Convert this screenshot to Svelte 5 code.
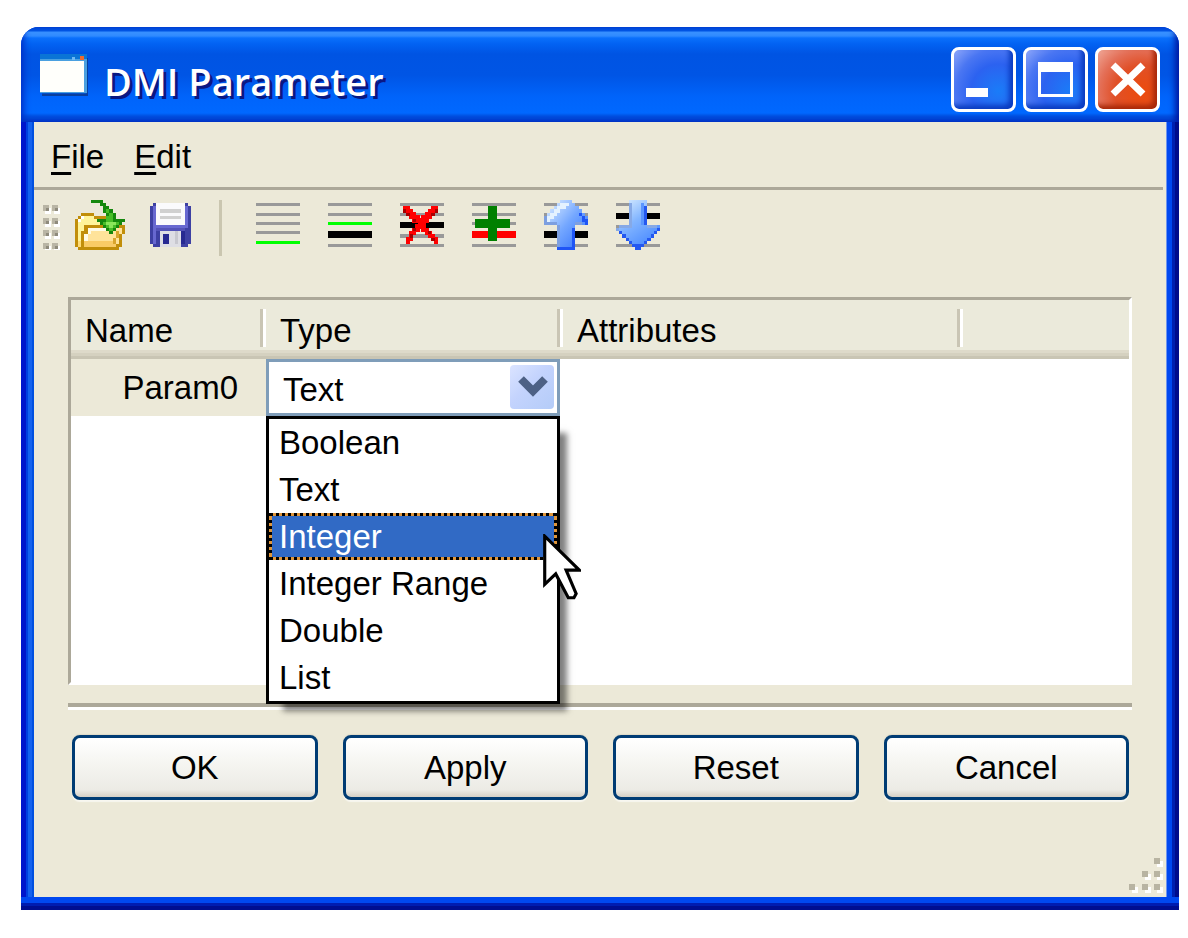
<script>
  const types = ['Boolean', 'Text', 'Integer', 'Integer Range', 'Double', 'List'];
  const actions = ['OK', 'Apply', 'Reset', 'Cancel'];

  let rows = $state([{ name: 'Param0', type: 'Text' }]);
  let openRow = $state(0);
  let hovered = $state('Integer');

  function toggle(e, i) {
    e.preventDefault();
    openRow = openRow === i ? -1 : i;
  }

  function pick(row, type) {
    row.type = type;
    openRow = -1;
  }

  // y, height, colour of each line, on a 16px grid
  const G = '#999999';
  const tools = [
    { id: 'append', label: 'Append row', lines: [[1, 1, G], [4, 1, G], [7, 1, G], [10, 1, G], [13, 1, '#00ff00']] },
    { id: 'insert', label: 'Insert row', lines: [[1, 1, G], [4, 1, G], [7, 1, '#00ff00'], [10, 2, '#000'], [14, 1, G]] },
    { id: 'delete', label: 'Delete row', lines: [[1, 1, G], [4, 1, G], [7, 2, '#000'], [11, 1, G], [14, 1, G]] },
    { id: 'copy', label: 'Duplicate row', lines: [[1, 1, G], [4, 1, G], [7, 1, G], [10, 2, '#f00'], [14, 1, G]] },
    { id: 'up', label: 'Move up', lines: [[1, 1, G], [4, 1, G], [7, 1, G], [10, 2, '#000'], [14, 1, G]] },
    { id: 'down', label: 'Move down', lines: [[1, 1, G], [4, 2, '#000'], [8, 1, G], [14, 1, G]] }
  ];
</script>

<main class="window">
  <header class="titlebar">
    <svg class="app-icon" viewBox="0 0 48 42" aria-hidden="true">
      <path d="M2 41H48V4" fill="none" stroke="#0a3f9c" stroke-width="3" />
      <rect width="47" height="39" fill="#4aa0e0" />
      <rect width="47" height="5" fill="#0a74d6" />
      <rect x="32" y="3" width="3" height="3" fill="#6db8f5" />
      <rect x="40" y="2" width="4" height="4" fill="#f06a30" />
      <rect y="7" width="44" height="31" fill="#fffffb" />
    </svg>
    <h1>DMI Parameter</h1>
    <div class="caption-buttons">
      <button class="caption" aria-label="Minimize">
        <svg viewBox="0 0 65 65"><rect x="15" y="41" width="22" height="9" fill="#fff" /></svg>
      </button>
      <button class="caption" aria-label="Maximize">
        <svg viewBox="0 0 65 65"><path fill="#fff" fill-rule="evenodd" d="M15 15h35v35H15zM18 25v22h29V25z" /></svg>
      </button>
      <button class="caption close" aria-label="Close">
        <svg viewBox="0 0 65 65"><path d="M18 18L48 47M48 18L18 47" stroke="#fff" stroke-width="7" /></svg>
      </button>
    </div>
  </header>

  <div class="client">
    <nav class="menubar">
      <button><u>F</u>ile</button>
      <button><u>E</u>dit</button>
    </nav>

    <div class="toolbar" role="toolbar" aria-label="Parameter tools">
      <svg class="grip" viewBox="0 0 18 50" aria-hidden="true">
        {#each [5, 18, 30, 43] as y}
          {#each [0, 9] as x}
            <rect x={x + 2} y={y + 3} width="6" height="6" fill="#fff" />
            <rect {x} {y} width="6" height="6" fill="#b9b5a5" />
            <rect x={x + 3} y={y + 3} width="3" height="3" fill="#8f8b7c" />
          {/each}
        {/each}
      </svg>

      <button class="tool" aria-label="Open">
        <svg viewBox="0 0 16 16" shape-rendering="crispEdges">
          <path d="M0 6h1V5h1V4h4v1h5v3h5v3h-1v4h-1v1H1v-1H0z" fill="#c18e0a" />
          <path d="M1 6h1V5h4v1h1v1h4v1H3v2H2v5H1z" fill="#fff49a" />
          <path d="M7 6h4v1H7z" fill="#e0b030" />
          <path d="M1 6h1v1H1zM2 5h1v1H2z" fill="#fff" />
          <path d="M1 13h1v2H1z" fill="#ffdc78" />
          <path d="M4 9h11v2h-1v3h-1v1H3v-4h1z" fill="#ffe39a" />
          <path d="M3 13h10v2H3z" fill="#f9cb66" />
          <path d="M4 9h8v1H5v1H4v2H3v-2h1z" fill="#fffbe6" />
          <path d="M13 10h1v2h-1v2h-1v-2h1z" fill="#d9a52c" />
          <path d="M5 0h4v1h1v1h1v1h1v1h1v2h3v1h-1v1h-1v1h-1v1h-1v1h-1v-1h-1V9H9V8H8V7H7V6h3V4H9V2H8V1H5z" fill="#15880d" />
          <path d="M10 3h1v1h1v3h2v1h-1v1h-1v1h-1V9h-1V8H9V7h1V5h1V4h-1z" fill="#48bd28" />
          <path d="M10 7h3v1h-1v1h-1V8h-1z" fill="#8ae65a" />
        </svg>
      </button>

      <button class="tool" aria-label="Save">
        <svg viewBox="0 0 16 16" shape-rendering="crispEdges">
          <path d="M1 2h1V1h11v1h1v12h-1v1H2v-1H1z" fill="#3d40a3" />
          <path d="M2 2h1v12H2zM12 2h1v7h-1zM3 8h9v1H3z" fill="#6768d0" />
          <path d="M3 9h9v1H3z" fill="#5353b8" />
          <path d="M3 1h9v7H3z" fill="#fafafc" />
          <path d="M4 3h7v1H4zM4 5h7v1H4z" fill="#d0d0d0" />
          <path d="M4 10h7v5H4z" fill="#dedee4" />
          <path d="M9 10h1v4H9z" fill="#c8c8cf" />
          <path d="M5 11h2v3H5zM11 10h1v4h-1z" fill="#272991" />
        </svg>
      </button>

      <span class="divider"></span>

      {#each tools as tool (tool.id)}
        <button class="tool" aria-label={tool.label}>
          <svg viewBox="0 0 16 16" shape-rendering="crispEdges">
            {#each tool.lines as [y, height, fill]}
              <rect x="1" {y} width="14" {height} {fill} />
            {/each}
            {#if tool.id === 'delete'}
              <path d="M2 2h2v1h1v1h1v1h1v1h1V5h1V4h1V3h1V2h2v2h-1v1h-1v1h-1v1H9v2h1v1h1v1h1v1h1v2h-1v-1h-1v-1h-1v-1H9v-1H8V9H7v1H6v1H5v2H4v1H3v-2h1v-2h1V9h1V8h1V7H5V6H4V5H3V4H2z" fill="#f00" stroke="#f00" stroke-width="0.4" />
              <path d="M2 3h1v1H2zM3 4h1v1H3zM5 6h1v1H5zM12 3h1v1h-1zM11 4h1v1h-1zM5 9h1v1H5zM4 11h1v1H4zM10 10h1v1h-1zM11 12h1v1h-1z" fill="#a80000" />
            {:else if tool.id === 'copy'}
              <path d="M6 2h3v4h4v3H9v4H6V9H2V6h4z" fill="#008000" />
            {:else if tool.id === 'up'}
              <defs>
                <linearGradient id="up-fill" x1="0" y1="0" x2="1" y2="1">
                  <stop offset="0.1" stop-color="#d2e6ff" />
                  <stop offset="0.5" stop-color="#74a7ff" />
                  <stop offset="1" stop-color="#2c6dfa" />
                </linearGradient>
              </defs>
              <path d="M6 0h4v1h1v1h1v1h1v1h1v1h1v3h-4v8H5V8H1V5h1V4h1V3h1V2h1V1h1z" fill="url(#up-fill)" />
              <path d="M5 8h1v7H5zM1 5h1v3H1zM2 7h3v1H2zM11 7h2v1h-2z" fill="#7d9fe0" />
              <path d="M10 9h1v7H5v-1h5zM14 6h1v2h-1zM13 5h1v2h-1zM12 4h1v1h-1z" fill="#1f55f5" />
              <path d="M6 1h3v1H6zM5 2h3v1H5zM4 3h2v1H4zM3 4h2v1H3zM2 5h2v1H2zM2 6h1v1H2z" fill="#e4f2ff" />
            {:else if tool.id === 'down'}
              <defs>
                <linearGradient id="down-fill" x1="0" y1="0" x2="0.6" y2="1">
                  <stop offset="0" stop-color="#e4f4ff" />
                  <stop offset="0.5" stop-color="#82b5ff" />
                  <stop offset="1" stop-color="#4a8aff" />
                </linearGradient>
              </defs>
              <path d="M5 0h6v8h4v2h-1v1h-1v1h-1v1h-1v1h-1v1H9v1H7v-1H6v-1H5v-1H4v-1H3v-1H2v-1H1V9h4z" fill="url(#down-fill)" />
              <path d="M5 1h1v8H5zM1 9h1v1H1zM2 8h3v1H2zM11 8h3v1h-3z" fill="#86a9e6" />
              <path d="M9 1h1v7H9z" fill="#5a95ff" />
              <path d="M10 2h1v6h-1zM14 9h1v1h-1v1h-1v1h-1v1h-1v1h-1v1H9v1H7v-1H6v-1h4v-1h1v-1h1v-1h1v-1h1zM2 10h1v1h1v1h1v1h1v1H5v-1H4v-1H3v-1H2z" fill="#2458f0" />
            {/if}
          </svg>
        </button>
      {/each}
    </div>

    <section class="content">
      <div class="frame">
        <table>
          <colgroup>
            <col class="col-name" />
            <col class="col-type" />
            <col class="col-attrs" />
            <col />
          </colgroup>
          <thead>
            <tr>
              <th scope="col"><div>Name</div></th>
              <th scope="col"><div>Type</div></th>
              <th scope="col"><div>Attributes</div></th>
              <td class="filler"></td>
            </tr>
          </thead>
          <tbody>
            {#each rows as row, i (row.name)}
              <tr>
                <th scope="row">{row.name}</th>
                <td class="type-cell">
                  <div class="combo">
                    <select bind:value={row.type} aria-label="Type of {row.name}" onmousedown={(e) => toggle(e, i)}>
                      {#each types as type}
                        <option>{type}</option>
                      {/each}
                    </select>
                    <span class="arrow">
                      <svg viewBox="0 0 44 44" aria-hidden="true">
                        <path d="M11 14L23 26L35 14" fill="none" stroke="#4d6185" stroke-width="8" />
                      </svg>
                    </span>
                    {#if openRow === i}
                      <div class="popup" role="listbox" aria-label="Types">
                        {#each types as type}
                          <button
                            role="option"
                            aria-selected={hovered === type}
                            class:hot={hovered === type}
                            onmouseenter={() => (hovered = type)}
                            onclick={() => pick(row, type)}
                          >{type}</button>
                        {/each}
                        <svg class="pointer" viewBox="0 0 12 21" aria-hidden="true">
                          <path d="M.5 .7V16L4 12.7L8 20.3H9.8L10.5 19L7.3 11.5H11.5Z" fill="#fff" stroke="#000" />
                        </svg>
                      </div>
                    {/if}
                  </div>
                </td>
                <td></td>
                <td></td>
              </tr>
            {/each}
          </tbody>
        </table>
      </div>

      <hr />

      <div class="actions">
        {#each actions as action}
          <button>{action}</button>
        {/each}
      </div>
    </section>

    <footer class="statusbar">
      <svg class="sizer" viewBox="0 0 34 36" aria-hidden="true">
        {#each [[25, 0], [13, 13], [25, 13], [0, 26], [13, 26], [25, 26]] as [x, y]}
          <rect x={x + 3} y={y + 3} width="6" height="6" fill="#fff" />
          <rect {x} {y} width="6" height="6" fill="#b8b4a2" />
        {/each}
      </svg>
    </footer>
  </div>
</main>

<style>
  :global(body) {
    background: #fff;
  }

  .window {
    --face: #ece9d8;
    --shadow: #aca899;
    margin: 27px 9px 28px 21px;
    border-radius: 18px 18px 0 0;
    overflow: hidden;
    background: #0046e6;
    font-family: 'Liberation Sans', Arial, sans-serif;
    font-size: 33px;
    line-height: 47px;
    color: #000;
  }

  button,
  select {
    font: inherit;
    color: inherit;
    margin: 0;
    padding: 0;
    border: 0;
    background: none;
  }

  .titlebar {
    display: flex;
    align-items: center;
    height: 95px;
    padding: 0 19px;
    box-sizing: border-box;
    background: linear-gradient(
      to bottom,
      #0058e8 0, #0058e8 4px, #3a92ff 5px, #2f8aff 9px, #0a70fc 11px, #0262f2 17px,
      #0054e3 27px, #0055e5 48px, #0064fb 70px, #0068ff 86px, #0050e0 89px, #003fce 95px
    );
    box-shadow: inset 5px 0 6px -2px #0030c8, inset -6px 0 6px -2px #0018a0;
  }

  .app-icon {
    width: 48px;
    height: 42px;
  }

  h1 {
    flex: 1;
    margin: 14px 0 0 16px;
    font-family: 'Open Sans', 'Noto Sans', sans-serif;
    font-size: 38px;
    font-weight: 600;
    color: #fff;
    text-shadow: 3px 3px 0 #0a1883;
  }

  .caption-buttons {
    display: flex;
    gap: 7px;
    margin-top: 9px;
  }

  .caption {
    width: 65px;
    height: 65px;
    border: 3px solid #fff;
    border-radius: 8px;
    background: radial-gradient(circle at 75% 70%, #1a7cf8 0, #2c62f0 45%, #4a76f2 70%, #8fa8fa 100%);
    box-shadow: inset -4px -4px 5px #0a3cc0;
  }

  .caption svg {
    display: block;
    width: 65px;
    height: 65px;
    margin: -3px;
  }

  .close {
    background: radial-gradient(circle at 75% 72%, #ec4a0c 0, #e05028 45%, #e47058 70%, #f0a898 100%);
    box-shadow: inset -4px -4px 5px #a82808;
  }

  .client {
    margin: 0 13px;
    background: var(--face);
    box-shadow: -2px 0 0 #0050e0, -6px 0 0 #1462ee, -8px 0 0 #0040e0, -13px 0 0 #0015cc,
      1px 0 0 #6f95ef, 6px 0 0 #0048f0, 9px 0 0 #0020b0, 13px 0 0 #000c8c;
  }

  .window::after {
    content: '';
    display: block;
    height: 13px;
    background: linear-gradient(#0048f0 0 6px, #001cb0 6px 9px, #000e90 9px);
  }

  .menubar {
    display: flex;
    gap: 30px;
    height: 68px;
    padding: 4px 0 0 17px;
    margin-right: 3px;
    box-sizing: border-box;
    border-bottom: 3px solid var(--shadow);
  }

  .menubar u {
    text-decoration-thickness: 3px;
    text-underline-offset: 4px;
  }

  .toolbar {
    display: flex;
    gap: 22px;
    padding: 10px 9px 41px;
  }

  .grip {
    width: 18px;
    height: 50px;
    margin-right: -8px;
  }

  .tool,
  .tool svg {
    display: block;
    width: 50px;
    height: 50px;
  }

  .divider {
    width: 3px;
    height: 56px;
    margin-right: 9px;
    background: #cac6b0;
  }

  .content {
    padding: 0 34px;
  }

  .frame {
    min-height: 388px;
    box-sizing: border-box;
    border: 3px solid;
    border-color: var(--shadow) #fff #fff var(--shadow);
    background: #fff;
  }

  table {
    width: 100%;
    table-layout: fixed;
    border-collapse: collapse;
  }

  .col-name { width: 195px; }
  .col-type { width: 297px; }
  .col-attrs { width: 400px; }

  th, td {
    padding: 0;
    text-align: left;
    font-weight: normal;
  }

  thead th, .filler {
    height: 59px;
    background: linear-gradient(#ebeadb 0 50px, #dedaca 50px 53px, #d5d1c0 53px 56px, #c9c5b4 56px);
  }

  thead div {
    height: 38px;
    line-height: 44px;
    margin-bottom: 3px;
    padding-left: 14px;
    border-right: 3px solid #fff;
    box-shadow: inset -3px 0 0 #c9c5b4;
  }

  tbody th {
    padding-right: 28px;
    text-align: right;
    background: var(--face);
  }

  .type-cell {
    padding-right: 3px;
  }

  .combo {
    position: relative;
  }

  select {
    appearance: none;
    display: block;
    width: 100%;
    height: 57px;
    padding: 4px 0 0 14px;
    border: 3px solid #7f9db9;
    border-radius: 0;
    background: #fff;
    outline: 0;
  }

  .arrow {
    position: absolute;
    top: 6px;
    right: 6px;
    width: 44px;
    height: 44px;
    border-radius: 4px;
    background: linear-gradient(135deg, #dbe4ff, #c3d3fd 45%, #b4ccf8);
    pointer-events: none;
  }

  .arrow svg {
    display: block;
  }

  .popup {
    position: absolute;
    z-index: 1;
    top: 57px;
    left: 0;
    right: 0;
    border: 3px solid #000;
    background: #fff;
    box-shadow: 12px 12px 6px -5px rgba(0, 0, 0, 0.5);
  }

  .popup button {
    display: block;
    width: 100%;
    height: 47px;
    padding-left: 10px;
    text-align: left;
  }

  .popup .hot {
    padding-left: 7px;
    border: 3px dotted #000;
    line-height: 41px;
    color: #fff;
    background: linear-gradient(#316ac5, #316ac5) padding-box, #e0963a;
  }

  .pointer {
    position: absolute;
    top: 115px;
    right: -24px;
    width: 38px;
    height: 66px;
    pointer-events: none;
  }

  hr {
    height: 4px;
    margin: 18px 0 25px;
    border: 0;
    border-bottom: 3px solid #fff;
    background: var(--shadow);
  }

  .actions {
    display: flex;
    gap: 25px;
    padding: 0 3px 0 4px;
  }

  .actions button {
    flex: 1;
    height: 65px;
    border: 3px solid #003c74;
    border-radius: 8px;
    background: linear-gradient(#fff, #f6f6f2 40%, #ecebe5 88%, #d6d0c5);
    box-shadow: 0 2px 1px #f8f7f0, 0 -1px 1px #dedac8;
  }

  .statusbar {
    display: flex;
    justify-content: flex-end;
    align-items: flex-end;
    height: 97px;
  }

  .sizer {
    width: 34px;
    height: 36px;
    margin: 0 3px 3px 0;
  }
</style>
